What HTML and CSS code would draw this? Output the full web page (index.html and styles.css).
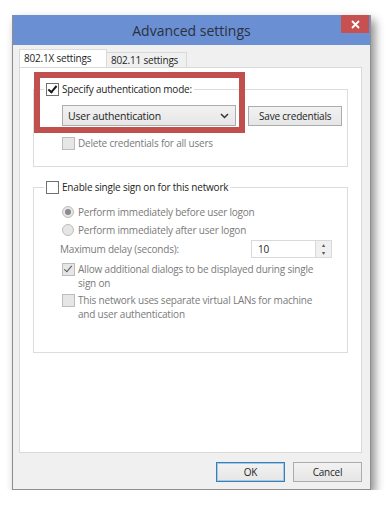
FILE: index.html
```html
<!DOCTYPE html>
<html lang="en">
<head>
    <meta charset="UTF-8">
    <meta name="viewport" content="width=device-width, initial-scale=1.0">
    <title>Advanced settings</title>
    <link rel="stylesheet" href="styles.css">
</head>
<body>
    <div class="window">
        <div class="titlebar">
            <div class="title">Advanced settings</div>
            <div class="close">
                <svg width="9" height="9" viewBox="0 0 9 9"><path d="M1 1 L8 8 M8 1 L1 8" stroke="#fff" stroke-width="1.8"/></svg>
            </div>
        </div>
        <div class="body">
            <div class="tabs">
                <div class="tab active">802.1X settings</div>
                <div class="tab">802.11 settings</div>
            </div>
            <div class="panel">
                <fieldset class="group">
                    <legend><span class="box checked"></span>Specify authentication mode:</legend>
                    <div class="mode-row">
                        <div class="select">User authentication
                            <svg class="arrow" width="9" height="6" viewBox="0 0 9 6"><path d="M1 1 L4.5 4.5 L8 1" fill="none" stroke="#333" stroke-width="1.5"/></svg>
                        </div>
                        <div class="button">Save credentials</div>
                    </div>
                    <div class="option disabled"><span class="box"></span>Delete credentials for all users</div>
                </fieldset>

                <fieldset class="group sso">
                    <legend><span class="box"></span>Enable single sign on for this network</legend>
                    <div class="option disabled"><span class="radio on"></span>Perform immediately before user logon</div>
                    <div class="option disabled"><span class="radio"></span>Perform immediately after user logon</div>
                    <div class="delay-row disabled">
                        <span>Maximum delay (seconds):</span>
                        <div class="spin">
                            <span class="spin-value">10</span>
                            <div class="spin-buttons">
                                <div class="spin-btn">&#9652;</div>
                                <div class="spin-btn">&#9662;</div>
                            </div>
                        </div>
                    </div>
                    <div class="option disabled wrap"><span class="box tick"></span><span>Allow additional dialogs to be displayed during single sign on</span></div>
                    <div class="option disabled wrap"><span class="box"></span><span>This network uses separate virtual LANs for machine and user authentication</span></div>
                </fieldset>

                <div class="highlight"></div>
            </div>
            <div class="actions">
                <div class="button default">OK</div>
                <div class="button">Cancel</div>
            </div>
        </div>
    </div>
</body>
</html>
```

FILE: styles.css
```css
body {
    margin: 0px;
    background: white;
    font-family: "Open Sans", "Noto Sans", sans-serif;
    font-size: 10px;
    letter-spacing: -0.2px;
    color: #1e1e1e;
}

.window {
    margin: 15px 0 0 12px;
    width: 357px;
    height: 474px;
    border: 1px solid #8e8e8e;
    border-top: none;
    background: #f0f0f0;
    box-shadow: 4px 5px 9px rgba(0, 0, 0, 0.45);
}

.titlebar {
    position: relative;
    height: 30px;
    background-color: #6b8fd3;
    display: flex;
    align-items: center;
    justify-content: center;
}

.title {
    font-size: 14px;
    letter-spacing: 0;
    color: #2a3140;
}

.close {
    position: absolute;
    top: 0px;
    right: 1px;
    width: 28px;
    height: 18px;
    background-color: #c75050;
    display: flex;
    align-items: center;
    justify-content: center;
}

.body {
    padding: 5px 8px 0 6px;
}

.tabs {
    display: flex;
    align-items: flex-end;
    height: 17px;
    position: relative;
    z-index: 1;
}

.tab {
    height: 14px;
    line-height: 14px;
    padding: 0 4px;
    border: 1px solid #d9d9d9;
    border-bottom: none;
    background: #f0f0f0;
    white-space: nowrap;
}

.tab.active {
    width: 78px;
    height: 17px;
    line-height: 16px;
    background: white;
    border-color: #d9d9d9;
}

.tab + .tab {
    border-left: none;
    width: 71px;
}

.panel {
    position: relative;
    height: 370px;
    background: white;
    border: 1px solid #d9d9d9;
    padding: 14px 13px 0 13px;
}

.group {
    margin: 0;
    padding: 0 0 0 28px;
    border: 1px solid #dcdcdc;
}

.group legend {
    display: flex;
    align-items: center;
    padding: 0 2px;
    margin-left: -18px;
    height: 14px;
}

.box {
    display: inline-block;
    position: relative;
    width: 11px;
    height: 11px;
    border: 1px solid #707070;
    background: white;
    margin-right: 3px;
    flex: none;
}

.box.checked::after,
.box.tick::after {
    content: "";
    position: absolute;
    left: 3px;
    top: 0px;
    width: 3px;
    height: 7px;
    border: solid #1a1a1a;
    border-width: 0 2px 2px 0;
    transform: rotate(40deg);
}

.box.tick::after {
    border-color: #555;
    border-width: 0 1.5px 1.5px 0;
}

.disabled {
    color: #7a7a7a;
}

.disabled .box {
    border-color: #bcbcbc;
    background: #e6e6e6;
}

.mode-row {
    display: flex;
    align-items: center;
    gap: 12px;
    margin-top: 9px;
}

.select {
    display: flex;
    align-items: center;
    justify-content: space-between;
    width: 161px;
    height: 19px;
    padding: 0 6px 0 5px;
    border: 1px solid #acacac;
    background: linear-gradient(#f2f2f2, #e6e6e6);
    font-size: 10.5px;
}

.button {
    display: flex;
    align-items: center;
    justify-content: center;
    height: 18px;
    border: 1px solid #acacac;
    background: linear-gradient(#f2f2f2, #e6e6e6);
    padding: 0 10px;
}

.option {
    display: flex;
    align-items: center;
    height: 14px;
    margin-top: 10px;
}

.mode-row + .option {
    margin-top: 10px;
    margin-bottom: 16px;
}

.sso {
    margin-top: 13px;
    height: 171px;
}

.sso legend + .option {
    margin-top: 11px;
}

.sso .option + .option {
    margin-top: 4px;
}

.radio {
    display: inline-block;
    width: 10px;
    height: 10px;
    border: 1px solid #bcbcbc;
    border-radius: 50%;
    background: #e6e6e6;
    margin-right: 4px;
    position: relative;
}

.radio.on::after {
    content: "";
    position: absolute;
    left: 2px;
    top: 2px;
    width: 6px;
    height: 6px;
    border-radius: 50%;
    background: #8a8a8a;
}

.delay-row {
    display: flex;
    align-items: center;
    justify-content: space-between;
    width: 272px;
    margin-left: -2px;
    margin-top: 3px;
}

.spin {
    display: flex;
    width: 79px;
    height: 16px;
    border: 1px solid #d9d9d9;
    background: white;
}

.spin-value {
    flex: 1;
    padding-left: 6px;
    line-height: 16px;
    color: #1e1e1e;
}

.spin-buttons {
    width: 15px;
    border-left: 1px solid #d9d9d9;
    background: #f0f0f0;
    display: flex;
    flex-direction: column;
}

.spin-btn {
    flex: 1;
    font-size: 6px;
    line-height: 8px;
    text-align: center;
    color: #555;
}

.option.wrap {
    height: auto;
    align-items: flex-start;
    line-height: 14px;
    width: 260px;
}

.option.wrap .box {
    margin-top: 1px;
}

.sso .delay-row + .option {
    margin-top: 4px;
}

.sso .option.wrap + .option.wrap {
    margin-top: 3px;
}

.highlight {
    position: absolute;
    left: 14px;
    top: 4px;
    width: 199px;
    height: 49px;
    border: 6px solid #c0504d;
}

.actions {
    display: flex;
    justify-content: flex-end;
    gap: 8px;
    margin-top: 9px;
}

.actions .button {
    width: 67px;
    padding: 0;
}

.button.default {
    border-color: #3c7fb1;
    box-shadow: inset 0 0 0 1px #9ccbeb;
}
```
